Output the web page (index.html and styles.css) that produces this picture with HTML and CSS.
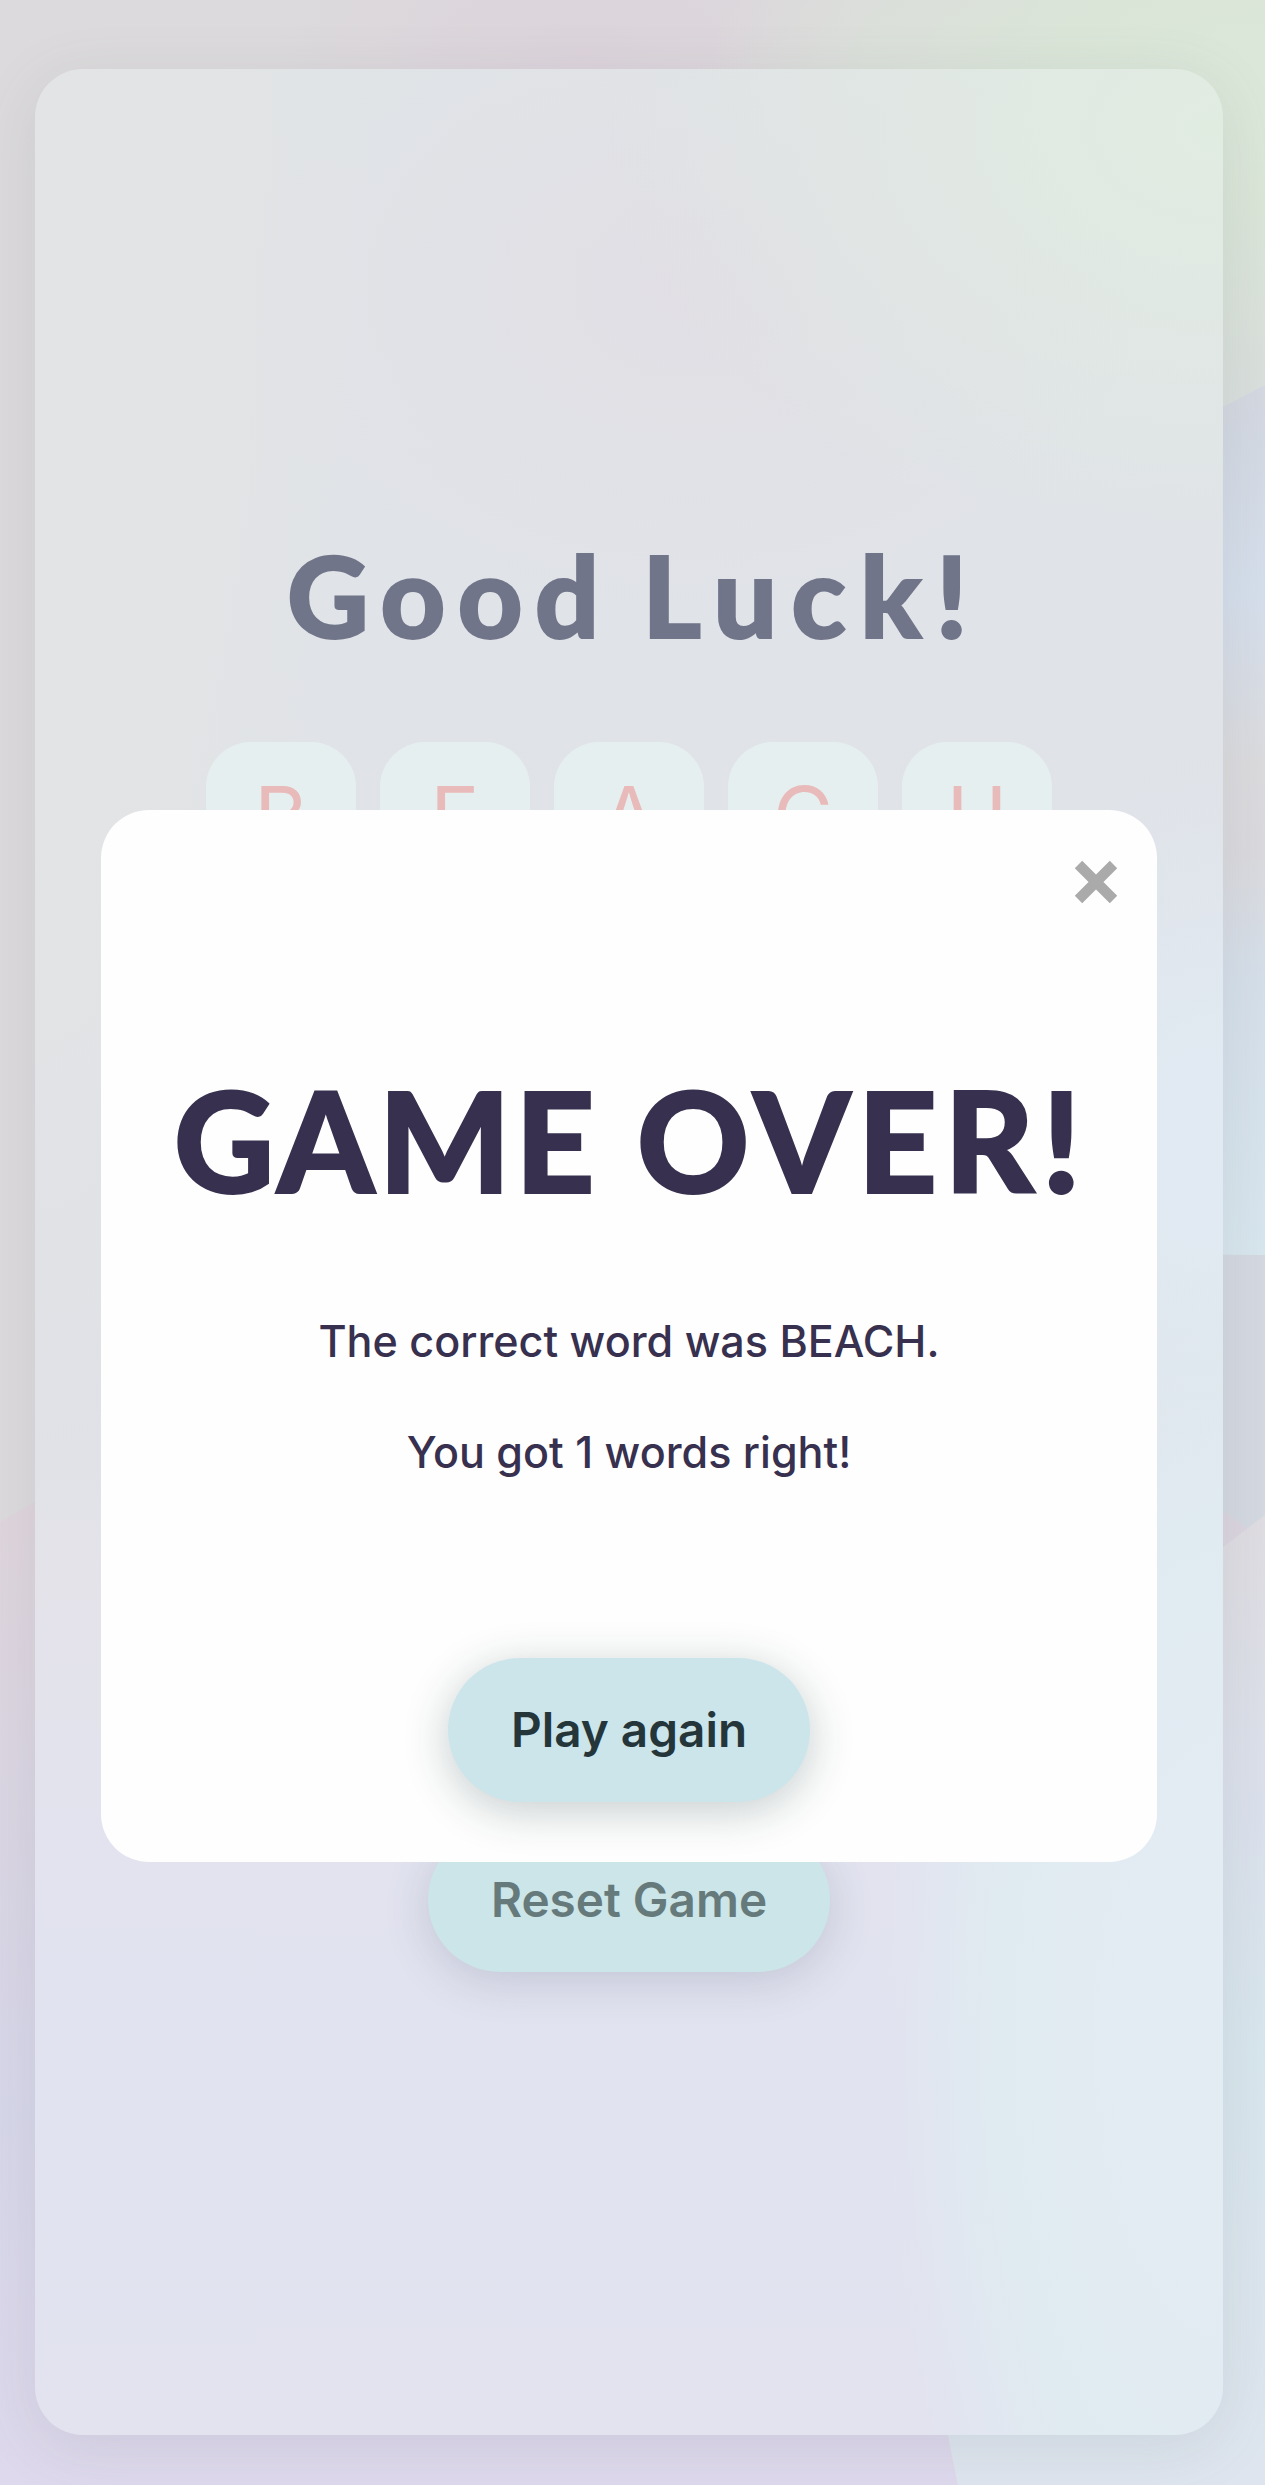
FILE: index.html
```html
<!DOCTYPE html>
<html lang="en">
<head>
<meta charset="utf-8">
<title>Word game</title>
<link rel="stylesheet" href="styles.css">
</head>
<body>
<svg class="backdrop" viewBox="0 0 1265 2485" preserveAspectRatio="none" aria-hidden="true">
  <defs>
    <linearGradient id="left" x1="0" y1="0" x2="0" y2="1">
      <stop offset="0" stop-color="#e1d5da"/><stop offset=".28" stop-color="#dcd6e1"/>
      <stop offset=".65" stop-color="#d7d7ea"/><stop offset="1" stop-color="#ded9ec"/>
    </linearGradient>
    <radialGradient id="green"><stop offset="0" stop-color="#dbe8d9"/><stop offset=".4" stop-color="#dae5d8"/><stop offset="1" stop-color="#dae5d8" stop-opacity="0"/></radialGradient>
    <radialGradient id="pink"><stop offset="0" stop-color="#dcd3db"/><stop offset="1" stop-color="#dcd3db" stop-opacity="0"/></radialGradient>
    <linearGradient id="blue" x1="0" y1="0" x2="0" y2="1">
      <stop offset="0" stop-color="#d3d8e1"/><stop offset=".22" stop-color="#d5dfec"/><stop offset=".42" stop-color="#dbdbde"/><stop offset=".53" stop-color="#dadade"/><stop offset=".68" stop-color="#d5dfea"/><stop offset="1" stop-color="#d8e6ee"/>
    </linearGradient>
    <linearGradient id="low" x1="0" y1="0" x2="0" y2="1">
      <stop offset="0" stop-color="#dfdde2"/><stop offset=".3" stop-color="#dbe1ec"/><stop offset=".55" stop-color="#d8e6ed"/><stop offset="1" stop-color="#dee5ee"/>
    </linearGradient>
  </defs>
  <rect width="1265" height="2485" fill="#dcdadc"/>
  <rect x="1150" y="200" width="115" height="1400" fill="#d4d9e1"/>
  <ellipse cx="580" cy="60" rx="300" ry="180" fill="url(#pink)"/>
  <path d="M1150 200H1265V385L1150 445Z" fill="#d9dfdc"/>
  <path d="M600 0H1265V385L1150 445L600 500Z" fill="url(#green)" class="glow"/>
  <ellipse cx="1265" cy="90" rx="560" ry="300" fill="url(#green)"/>
  <path d="M1265 405L1150 462V1254L1265 1255Z" fill="url(#blue)"/>
  <path d="M1150 1460L1247 1528L1200 1600H1150Z" fill="#dbd5df"/>
  <path d="M0 1522L35 1502L600 1400L1200 1560V2485H0Z" fill="url(#left)"/>
  <path d="M1265 1515L1180 1580Q850 2000 958 2485H1265Z" fill="url(#low)"/>
</svg>
<main class="card">
  <h1 class="title"><span class="good">Good</span><span class="luck">Luck!</span></h1>
  <div class="tiles">
    <span class="tile">B</span><span class="tile">E</span><span class="tile">A</span><span class="tile">C</span><span class="tile">H</span>
  </div>
  <button class="button reset">Reset Game</button>
</main>
<section class="modal" role="dialog">
  <button class="close" aria-label="Close"><svg viewBox="0 0 44 44" width="44" height="44"><path d="M4.5 4.5L39.5 39.5M39.5 4.5L4.5 39.5" stroke="#aaa" stroke-width="10.5"/></svg></button>
  <h2 class="over"><span class="game">GAME</span><span class="end">OVER!</span></h2>
  <p class="line">The correct word was BEACH.</p>
  <p class="line">You got 1 words right!</p>
  <button class="button again">Play again</button>
</section>
</body>
</html>
```
FILE: styles.css
```css
* { box-sizing: border-box; }
body {
  margin: 0;
  position: relative;
  height: 2485px;
  padding: 69px 42px 50px 35px;
  overflow: hidden;
  font-family: Inter, sans-serif;
}
.backdrop { position: absolute; inset: 0; width: 100%; height: 100%; z-index: -1; }
.glow { opacity: .3; }
.card {
  height: 2366px;
  padding-top: 465px;
  display: flex;
  flex-direction: column;
  align-items: center;
  border-radius: 48px;
  box-shadow: 0 12px 60px rgba(90, 100, 110, .13);
  background:
    radial-gradient(ellipse 620px 420px at 1188px 60px, #e1ece1, rgba(225, 236, 225, 0)),
    radial-gradient(ellipse 340px 800px at 1188px 1970px, #e3ebf3 30%, #e0ebf1 65%, rgba(224, 235, 241, 0)),
    radial-gradient(ellipse 330px 400px at 1188px 1080px, #e1eaf2 20%, rgba(225, 234, 242, 0)),
    radial-gradient(ellipse 450px 330px at 660px 220px, #e1dfe5, rgba(225, 223, 229, 0)),
    radial-gradient(ellipse 360px 1480px at 0 0, #e2e4e5 50%, rgba(226, 228, 229, 0)),
    linear-gradient(#e0e4e7, #e0e3e8 25%, #dfe1e7 56%, #e4e3ea 64%, #e2e3ef 76%, #e1e3f0 86%, #e2e3ef);
}
.title, .over {
  margin: 0;
  display: flex;
  font-family: Lato, sans-serif;
  font-weight: 900;
}
.title {
  height: 208px;
  gap: 31px;
  font-size: 113px;
  line-height: 120px;
  color: #717589;
  -webkit-text-stroke: 2px #717589;
}
.good { letter-spacing: 12px; }
.luck { letter-spacing: 14px; margin-right: -11px; }
.tiles { display: flex; gap: 24px; }
.tile {
  width: 150px;
  height: 150px;
  border-radius: 45px;
  background: #e6eff0;
  color: #e8baba;
  font-size: 82px;
  line-height: 150px;
  text-align: center;
}
.button {
  border: 0;
  height: 144px;
  border-radius: 72px;
  padding: 0;
  font: 600 47.7px Inter, sans-serif;
  background: #cbe5eb;
  color: #25363b;
}
.reset {
  width: 402px;
  margin-top: 936px;
  background: #cbe5e9;
  color: #667a7b;
  box-shadow: 0 9px 45px rgba(70, 80, 110, .2);
}
.modal {
  position: absolute;
  left: 101px;
  top: 810px;
  width: 1056px;
  height: 1052px;
  border-radius: 48px;
  background: #fefefe;
  color: #37304f;
  display: flex;
  flex-direction: column;
  align-items: center;
}
.close {
  align-self: flex-end;
  width: 44px;
  height: 44px;
  margin: 50px 39px 0 0;
  border: 0;
  padding: 0;
  background: none;
}
.close svg { display: block; }
.over {
  margin-top: 156px;
  height: 255px;
  gap: 38px;
  font-size: 139px;
  line-height: 160px;
  -webkit-text-stroke: 2px #37304f;
}
.game { letter-spacing: 4px; }
.end { letter-spacing: 7px; margin-right: -4px; }
.line { margin: 0 0 58px; font-size: 43.1px; line-height: 53px; font-weight: 500; white-space: nowrap; }
.again {
  width: 362px;
  margin-top: 121px;
  box-shadow: 0 9px 45px rgba(20, 50, 50, .24);
}
```
